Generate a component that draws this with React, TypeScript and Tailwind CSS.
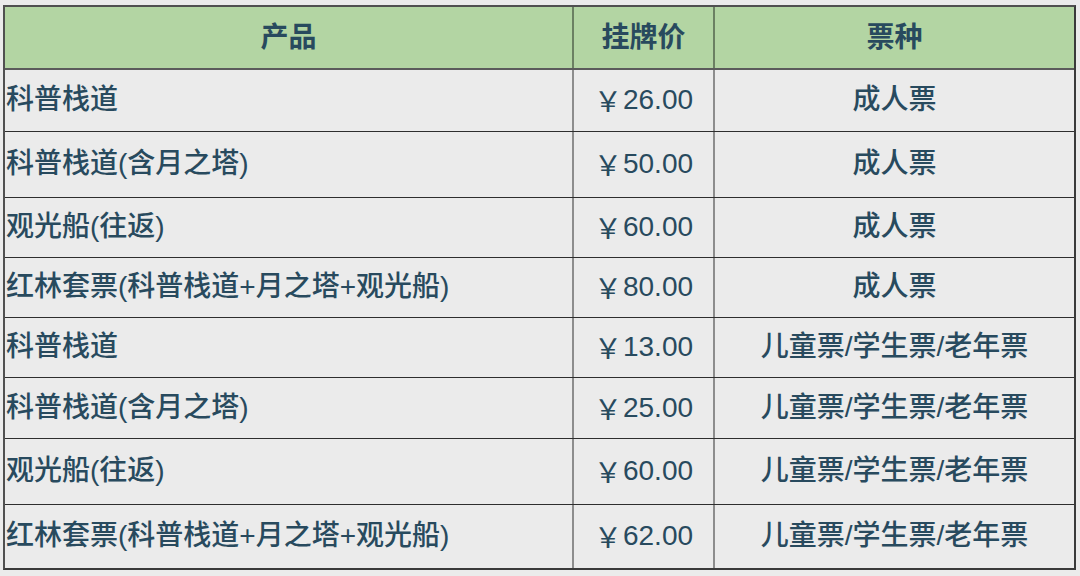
import React from "react";

const rows: { name: string; price: string; type: string; h: string }[] = [
  { name: "科普栈道", price: "26.00", type: "成人票", h: "h-[61px]" },
  { name: "科普栈道(含月之塔)", price: "50.00", type: "成人票", h: "h-[66px]" },
  { name: "观光船(往返)", price: "60.00", type: "成人票", h: "h-[60px]" },
  { name: "红林套票(科普栈道+月之塔+观光船)", price: "80.00", type: "成人票", h: "h-[60px]" },
  { name: "科普栈道", price: "13.00", type: "儿童票/学生票/老年票", h: "h-[60px]" },
  { name: "科普栈道(含月之塔)", price: "25.00", type: "儿童票/学生票/老年票", h: "h-[61px]" },
  { name: "观光船(往返)", price: "60.00", type: "儿童票/学生票/老年票", h: "h-[66px]" },
  { name: "红林套票(科普栈道+月之塔+观光船)", price: "62.00", type: "儿童票/学生票/老年票", h: "h-[64px]" },
];

export default function App() {
  return (
    <div
      className="w-[1080px] h-[576px] bg-[#ebebeb] pt-[5px] pl-[3px] text-[#284a5e] text-[28px] leading-none"
      style={{ fontFamily: '"Liberation Sans", "Noto Sans CJK SC", sans-serif' }}
    >
      <div className="w-[1073px] border-2 border-[#505050] border-r-[#3a3a3a] border-b-[#3a3a3a] flex flex-col">
        <div className="flex h-[63px] bg-[#b3d5a3] border-b-2 border-[#5b5b5b] font-bold">
          <div className="w-[567px] flex items-center justify-center">产品</div>
          <div className="w-[141px] flex items-center justify-center border-l-2 border-[rgba(0,0,0,0.4)]">挂牌价</div>
          <div className="flex-1 flex items-center justify-center border-l-2 border-[rgba(0,0,0,0.4)]">票种</div>
        </div>
        {rows.map((r, i) => (
          <div
            key={i}
            className={`flex ${r.h} font-medium ${i > 0 ? "border-t border-[#2e2e2e]" : ""}`}
          >
            <div className="w-[567px] flex items-center pl-[1px] pb-[1px]">{r.name}</div>
            <div className="w-[141px] flex items-center justify-center pb-[1px] border-l-2 border-[rgba(0,0,0,0.4)] font-normal">
              <span style={{ fontFamily: '"Noto Sans CJK SC", sans-serif' }} className="mr-[1px]">￥</span>
              <span>{r.price}</span>
            </div>
            <div className="flex-1 flex items-center justify-center pb-[1px] border-l-2 border-[rgba(0,0,0,0.4)]">{r.type}</div>
          </div>
        ))}
      </div>
    </div>
  );
}
